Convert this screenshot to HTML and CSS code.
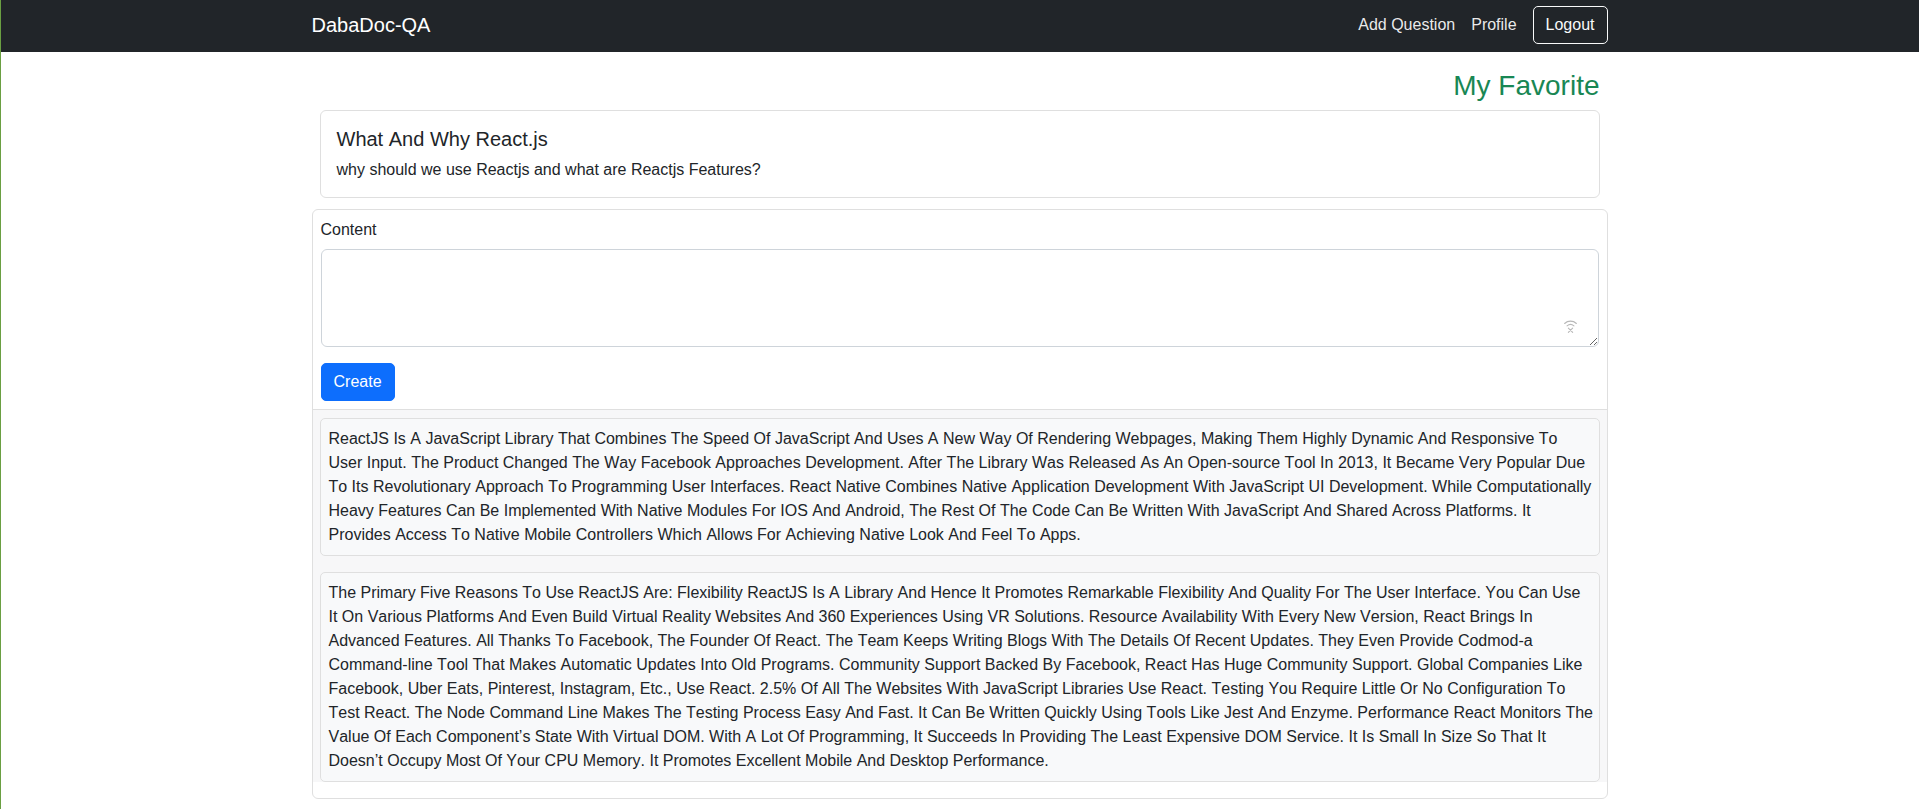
FILE: index.html
```html
<!DOCTYPE html>
<html lang="en">
<head>
<meta charset="utf-8">
<title>DabaDoc-QA</title>
<link rel="stylesheet" href="styles.css">
</head>
<body>
<nav class="navbar">
  <div class="container nav-inner">
    <a class="brand" href="#">DabaDoc-QA</a>
    <div class="nav-links">
      <a class="nav-link" href="#">Add Question</a>
      <a class="nav-link" href="#">Profile</a>
      <button class="btn-logout" type="button">Logout</button>
    </div>
  </div>
</nav>
<main class="container">
  <h3 class="page-title">My Favorite</h3>
  <div class="q-card">
    <h5 class="q-title">What And Why React.js</h5>
    <p class="q-body">why should we use Reactjs and what are Reactjs Features?</p>
  </div>
  <div class="a-card">
    <div class="a-body">
      <label class="form-label" for="content">Content</label>
      <div class="textarea-wrap">
        <textarea id="content" class="form-control"></textarea>
        <svg class="ta-icon" width="15" height="15" viewBox="0 0 14 14" fill="none" stroke="#b8b8b8" stroke-width="1" stroke-linecap="round">
          <path d="M1.5 4.2 A8 8 0 0 1 12.5 4.2"/>
          <path d="M3.8 6.4 A5 5 0 0 1 10.2 6.4"/>
          <path d="M5 8.5 L9 12.5 M9 8.5 L5 12.5"/>
        </svg>
      </div>
      <button class="btn-primary" type="button">Create</button>
    </div>
    <div class="a-footer">
      <div class="answer">ReactJS Is A JavaScript Library That Combines The Speed Of JavaScript And Uses A New Way Of Rendering Webpages, Making Them Highly Dynamic And Responsive To<br>User Input. The Product Changed The Way Facebook Approaches Development. After The Library Was Released As An Open-source Tool In 2013, It Became Very Popular Due<br>To Its Revolutionary Approach To Programming User Interfaces. React Native Combines Native Application Development With JavaScript UI Development. While Computationally<br>Heavy Features Can Be Implemented With Native Modules For IOS And Android, The Rest Of The Code Can Be Written With JavaScript And Shared Across Platforms. It<br>Provides Access To Native Mobile Controllers Which Allows For Achieving Native Look And Feel To Apps.</div>
      <div class="answer">The Primary Five Reasons To Use ReactJS Are: Flexibility ReactJS Is A Library And Hence It Promotes Remarkable Flexibility And Quality For The User Interface. You Can Use<br>It On Various Platforms And Even Build Virtual Reality Websites And 360 Experiences Using VR Solutions. Resource Availability With Every New Version, React Brings In<br>Advanced Features. All Thanks To Facebook, The Founder Of React. The Team Keeps Writing Blogs With The Details Of Recent Updates. They Even Provide Codmod-a<br>Command-line Tool That Makes Automatic Updates Into Old Programs. Community Support Backed By Facebook, React Has Huge Community Support. Global Companies Like<br>Facebook, Uber Eats, Pinterest, Instagram, Etc., Use React. 2.5% Of All The Websites With JavaScript Libraries Use React. Testing You Require Little Or No Configuration To<br>Test React. The Node Command Line Makes The Testing Process Easy And Fast. It Can Be Written Quickly Using Tools Like Jest And Enzyme. Performance React Monitors The<br>Value Of Each Component’s State With Virtual DOM. With A Lot Of Programming, It Succeeds In Providing The Least Expensive DOM Service. It Is Small In Size So That It<br>Doesn’t Occupy Most Of Your CPU Memory. It Promotes Excellent Mobile And Desktop Performance.</div>
    </div>
  </div>
</main>
</body>
</html>
```
FILE: styles.css
```css
* { box-sizing: border-box; }

body {
  margin: 0;
  font-family: "Liberation Sans", Arial, sans-serif;
  font-size: 16px;
  line-height: 1.5;
  color: #212529;
  background: #fff;
  font-kerning: none;
}

body::after {
  content: "";
  position: fixed;
  left: 0;
  top: 0;
  bottom: 0;
  width: 1px;
  background: #6a9f42;
}

.container {
  max-width: 1320px;
  margin: 0 auto;
  padding: 0 12px;
}

.navbar {
  background: #212529;
  height: 52px;
  padding: 6px 0 8px;
}

.nav-inner {
  display: flex;
  align-items: center;
  justify-content: space-between;
  height: 38px;
}

.brand {
  color: #fff;
  font-size: 20px;
  line-height: 30px;
  text-decoration: none;
}

.nav-links {
  display: flex;
  align-items: center;
}

.nav-link {
  color: rgba(255, 255, 255, 0.92);
  text-decoration: none;
  padding: 0 8px;
  line-height: 24px;
}

.btn-logout {
  margin-left: 8px;
  font-family: inherit;
  font-size: 16px;
  line-height: 24px;
  padding: 6px 12px;
  color: #f8f9fa;
  background: transparent;
  border: 1px solid #f8f9fa;
  border-radius: 5px;
}

.page-title {
  margin: 17px 8px 7px;
  text-align: right;
  font-size: 28px;
  line-height: 1.2;
  font-weight: 500;
  color: #198754;
}

.q-card {
  margin: 0 8px 11px;
  border: 1px solid #dfdfdf;
  border-radius: 6px;
  padding: 16px 16px 15px;
}

.q-title {
  margin: 0 0 7px;
  font-size: 20px;
  line-height: 1.2;
  font-weight: 500;
}

.q-body {
  margin: 0;
}

.a-card {
  border: 1px solid #dfdfdf;
  border-radius: 6px;
  overflow: hidden;
}

.a-body {
  padding: 8px;
}

.form-label {
  display: block;
  margin-bottom: 7px;
}

.textarea-wrap {
  position: relative;
  margin-bottom: 16px;
}

.form-control {
  display: block;
  width: 100%;
  height: 98px;
  padding: 6px 12px;
  font-family: inherit;
  font-size: 16px;
  line-height: 24px;
  color: #212529;
  border: 1px solid #ced4da;
  border-radius: 6px;
  resize: vertical;
}

.ta-icon {
  position: absolute;
  right: 21px;
  bottom: 13px;
}

.btn-primary {
  font-family: inherit;
  font-size: 16px;
  line-height: 24px;
  padding: 6px 12px;
  color: #fff;
  background: #0d6efd;
  border: 1px solid #0d6efd;
  border-radius: 5px;
}

.a-footer {
  border-top: 1px solid #dfdfdf;
  background: #f7f7f8;
  padding: 8px 7px 0;
}

.answer {
  background: #f8f9fa;
  border: 1px solid #dfdfdf;
  border-radius: 5px;
  padding: 8px;
  margin-bottom: 16px;
  white-space: nowrap;
}
```
